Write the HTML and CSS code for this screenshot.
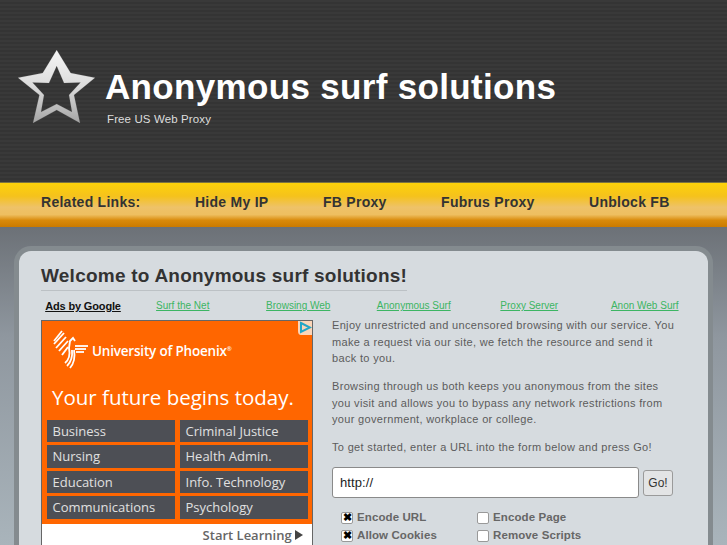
FILE: index.html
```html
<!DOCTYPE html>
<html lang="en">
<head>
<meta charset="utf-8">
<title>Anonymous surf solutions</title>
<link rel="stylesheet" href="styles.css">
</head>
<body>
<header class="masthead">
  <svg class="star" width="78" height="75" viewBox="0 0 78 75">
    <defs>
      <linearGradient id="starFill" x1="0" y1="0" x2="0" y2="1">
        <stop offset="0" stop-color="#f6f6f6"/>
        <stop offset="0.5" stop-color="#dcdcdc"/>
        <stop offset="1" stop-color="#a4a4a4"/>
      </linearGradient>
    </defs>
    <path fill="url(#starFill)" fill-rule="evenodd" stroke="#888" stroke-opacity="0.3" stroke-width="0.500" d="M38.700 0 L52.700 23 L77 27.700 L56 45 L62 73 L38.700 60 L15 73 L21.400 45 L0 27.700 L24.700 23 Z M38.700 16 L31 33 L14.500 32.500 L26 45 L23 62 L38.700 54 L54 62 L51 45 L62.500 32.500 L46 33 Z"/>
  </svg>
  <div class="brand">
    <h1 class="site-title">Anonymous surf solutions</h1>
    <p class="tagline">Free US Web Proxy</p>
  </div>
</header>
<nav class="linkbar">
  <span class="linkbar-item">Related Links:</span>
  <a class="linkbar-item" href="#">Hide My IP</a>
  <a class="linkbar-item" href="#">FB Proxy</a>
  <a class="linkbar-item" href="#">Fubrus Proxy</a>
  <a class="linkbar-item" href="#">Unblock FB</a>
</nav>
<main class="stage">
  <section class="card">
    <h2 class="welcome">Welcome to Anonymous surf solutions!</h2>
    <div class="adlinks">
      <a class="adlinks-label" href="#">Ads by Google</a>
      <a href="#">Surf the Net</a>
      <a href="#">Browsing Web</a>
      <a href="#">Anonymous Surf</a>
      <a href="#">Proxy Server</a>
      <a href="#">Anon Web Surf</a>
    </div>
    <div class="columns">
      <aside class="ad">
        <div class="ad-orange">
          <svg class="ad-choice" width="17" height="14" viewBox="0 0 17 14">
            <path d="M3 0 H17 V14 H6 Q3 14 3 10 Z" fill="#fbd5b8"/>
            <path d="M6 2 L15 6.500 L6 11 Z" fill="none" stroke="#23a6c6" stroke-width="2"/>
          </svg>
          <div class="ad-logo">
            <svg width="36" height="42" viewBox="0 0 36 42">
              <g fill="none" stroke="#fff" stroke-width="1.800">
                <path d="M1 13 L9 3"/>
                <path d="M1 16 L11 5"/>
                <path d="M3 20 L13 9"/>
                <path d="M6 23 L15 13"/>
                <path d="M9 27 L15 19"/>
                <path d="M12 35 Q18 30 16 20 L17 13 L20 10 L22 13"/>
                <path d="M14 38 Q20 32 19 22"/>
                <path d="M17 40 Q23 33 21 22"/>
                <path d="M22 18 H35"/>
                <path d="M22 21 H33"/>
                <path d="M23 24 H31"/>
              </g>
            </svg>
            <span class="ad-logo-text">University of Phoenix<sup class="ad-reg">®</sup></span>
          </div>
          <p class="ad-slogan">Your future begins today.</p>
          <div class="ad-grid">
            <span class="ad-cell">Business</span>
            <span class="ad-cell">Criminal Justice</span>
            <span class="ad-cell">Nursing</span>
            <span class="ad-cell">Health Admin.</span>
            <span class="ad-cell">Education</span>
            <span class="ad-cell">Info. Technology</span>
            <span class="ad-cell">Communications</span>
            <span class="ad-cell">Psychology</span>
          </div>
        </div>
        <div class="ad-foot">Start Learning <span class="ad-arrow"></span></div>
      </aside>
      <div class="intro">
        <p>Enjoy unrestricted and uncensored browsing with our service. You make a request via our site, we fetch the resource and send it back to you.</p>
        <p>Browsing through us both keeps you anonymous from the sites you visit and allows you to bypass any network restrictions from your government, workplace or college.</p>
        <p>To get started, enter a URL into the form below and press Go!</p>
        <form class="proxy-form">
          <div class="url-row">
            <input class="url-input" type="text" value="http://">
            <button class="go" type="button">Go!</button>
          </div>
          <div class="options">
            <label class="option"><span class="box box-on">✖</span>Encode URL</label>
            <label class="option"><span class="box"></span>Encode Page</label>
            <label class="option"><span class="box box-on">✖</span>Allow Cookies</label>
            <label class="option"><span class="box"></span>Remove Scripts</label>
          </div>
        </form>
      </div>
    </div>
  </section>
</main>
</body>
</html>
```
FILE: styles.css
```css
html, body { margin: 0; padding: 0; height: 545px; overflow: hidden; }
body { font-family: "Liberation Sans", Arial, sans-serif; background: #8f979f; }

.masthead {
  height: 182px;
  box-sizing: border-box;
  padding: 50px 0 0 18px;
  display: flex;
  align-items: flex-start;
  gap: 9px;
  background: repeating-linear-gradient(180deg, #393939 0, #393939 2px, #343434 2px, #343434 4px);
}
.star { flex: none; }
.brand { padding-top: 15px; }
.site-title { margin: 0; color: #fff; font-size: 35px; line-height: 44px; font-weight: 700; letter-spacing: 0.33px; }
.tagline { margin: 2px 0 0 2px; color: #ddd; font-size: 11.500px; line-height: 16px; letter-spacing: 0.12px; }

.linkbar {
  height: 45px;
  box-sizing: border-box;
  padding: 0 0 6px 41px;
  display: flex;
  align-items: center;
  gap: 54.500px;
  border-top: 1px solid #7d7442;
  background: linear-gradient(180deg, #fdd20a 0, #f5c21c 30%, #eec268 55%, #eebf60 72%, #d98a0a 85%, #cb7a00 100%);
}
.linkbar-item { color: #333; font-size: 14px; font-weight: 700; text-decoration: none; letter-spacing: 0.27px; }

.stage {
  height: 318px;
  padding: 24px 19px 0;
  box-sizing: border-box;
  background: linear-gradient(180deg, #6c7177 0, #8f979f 110px, #a9b4bb 100%);
}
.card {
  height: 320px;
  box-sizing: border-box;
  padding: 14px 6px 0 22px;
  background: #d6dbdf;
  border-radius: 12px 12px 0 0;
  box-shadow: 0 0 0 5px #848b8f;
}
.welcome {
  display: inline-block;
  margin: 0;
  padding-bottom: 3px;
  border-bottom: 1px solid #bcc1c5;
  color: #333;
  font-size: 19px;
  line-height: 22px;
  letter-spacing: 0.23px;
}
.adlinks {
  display: grid;
  grid-template-columns: 84px repeat(5, 115.500px);
  justify-items: center;
  padding-top: 9px;
  height: 20px;
  font-size: 10px;
  line-height: 12px;
}
.adlinks a { color: #3cb563; white-space: nowrap; }
.adlinks .adlinks-label { color: #111; font-weight: 700; font-size: 11px; letter-spacing: -0.15px; }

.columns { display: flex; gap: 19px; }
.ad { flex: none; width: 272px; border: 1px solid #666; border-bottom: 0; box-sizing: border-box; height: 230px; background: #fff; font-family: "Open Sans", sans-serif; }
.ad-orange { position: relative; height: 203px; background: #f60; box-sizing: border-box; padding: 7px 5px 0; color: #fff; }
.ad-choice { position: absolute; top: 0; right: 0; }
.ad-logo { display: flex; align-items: center; gap: 3px; padding-left: 6px; }
.ad-logo-text { font-size: 13.500px; font-weight: 600; letter-spacing: -0.2px; padding-top: 4px; }
.ad-reg { font-size: 6px; }
.ad-slogan { margin: 12px 0 0 5px; font-size: 20.500px; line-height: 30px; white-space: nowrap; }
.ad-grid { display: grid; grid-template-columns: 128px 128px; column-gap: 5px; row-gap: 3px; margin-top: 8px; }
.ad-cell { height: 22.400px; line-height: 22px; padding-left: 5.500px; background: #4d4f55; font-size: 13px; color: #e0e0e0; box-sizing: border-box; }
.ad-foot { text-align: right; padding: 2px 9px 0 0; color: #666; font-size: 13px; font-weight: 600; line-height: 18px; }
.ad-arrow { display: inline-block; border-left: 8px solid #444; border-top: 5px solid transparent; border-bottom: 5px solid transparent; }

.intro { width: 348px; flex: none; margin-top: -3px; color: #5c5c5c; font-size: 11px; line-height: 16.500px; letter-spacing: 0.33px; }
.intro p { margin: 0 0 11.500px; }
.proxy-form { margin-top: 5px; }
.url-row { display: flex; align-items: center; gap: 4px; }
.url-input {
  width: 307px; height: 31px; box-sizing: border-box; padding: 0 7px;
  border: 1px solid #8a8a8a; border-radius: 3px; background: #fff;
  font: 13px "Liberation Sans", sans-serif; color: #222; letter-spacing: 0.1px;
}
.go {
  width: 30px; height: 26px; padding: 0; border: 1px solid #9a9a9a; border-radius: 3px;
  background: #e3e4e5; color: #333; font: 12px "Liberation Sans", sans-serif;
}
.options { display: grid; grid-template-columns: 136px auto; margin: 12px 0 0 9px; row-gap: 3px; }
.option { display: flex; align-items: center; gap: 4px; font-weight: 700; font-size: 11.500px; line-height: 15px; letter-spacing: 0.1px; color: #666; }
.box { width: 12px; height: 12px; box-sizing: border-box; border: 1px solid #999; border-radius: 2px; background: #fff; display: inline-flex; align-items: center; justify-content: center; font-size: 11px; color: #000; letter-spacing: 0; line-height: 1; overflow: hidden; }
```
